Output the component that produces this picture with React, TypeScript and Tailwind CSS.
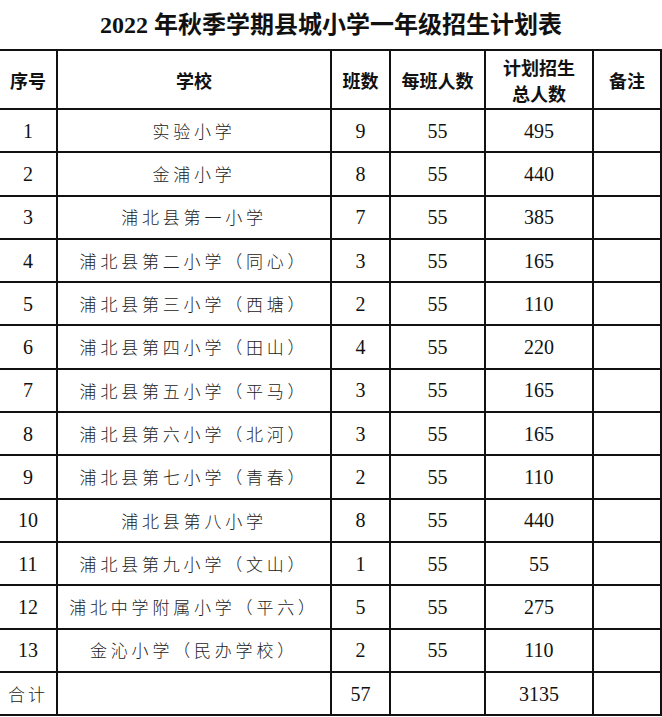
const rows = [
  { no: "1", name: "实验小学", cls: "9", per: "55", total: "495" },
  { no: "2", name: "金浦小学", cls: "8", per: "55", total: "440" },
  { no: "3", name: "浦北县第一小学", cls: "7", per: "55", total: "385" },
  { no: "4", name: "浦北县第二小学（同心）", cls: "3", per: "55", total: "165" },
  { no: "5", name: "浦北县第三小学（西塘）", cls: "2", per: "55", total: "110" },
  { no: "6", name: "浦北县第四小学（田山）", cls: "4", per: "55", total: "220" },
  { no: "7", name: "浦北县第五小学（平马）", cls: "3", per: "55", total: "165" },
  { no: "8", name: "浦北县第六小学（北河）", cls: "3", per: "55", total: "165" },
  { no: "9", name: "浦北县第七小学（青春）", cls: "2", per: "55", total: "110" },
  { no: "10", name: "浦北县第八小学", cls: "8", per: "55", total: "440" },
  { no: "11", name: "浦北县第九小学（文山）", cls: "1", per: "55", total: "55" },
  { no: "12", name: "浦北中学附属小学（平六）", cls: "5", per: "55", total: "275" },
  { no: "13", name: "金沁小学（民办学校）", cls: "2", per: "55", total: "110" },
];

const serif = "font-['Liberation_Serif','Noto_Sans_CJK_SC',serif]";
const cjk = "font-['Noto_Sans_CJK_SC',sans-serif]";

export default function App() {
  return (
    <div className="w-[662px] h-[717px] bg-white overflow-hidden text-[#111]">
      <div className="h-[49px] flex items-center justify-center">
        <h1 className={`${serif} font-bold text-[24px] leading-none pt-[1px]`}>
          2022 年秋季学期县城小学一年级招生计划表
        </h1>
      </div>
      <table className="table-fixed border-collapse w-[661px]">
        <colgroup>
          <col className="w-[57px]" />
          <col className="w-[274px]" />
          <col className="w-[59px]" />
          <col className="w-[95px]" />
          <col className="w-[108px]" />
          <col className="w-[68px]" />
        </colgroup>
        <thead>
          <tr className={`h-[59px] ${cjk} font-bold text-[18px] leading-[26px]`}>
            <th className="border-y-2 border-r-2 border-[#111] text-center">序号</th>
            <th className="border-2 border-[#111] text-center">学校</th>
            <th className="border-2 border-[#111] text-center">班数</th>
            <th className="border-2 border-[#111] text-center">每班人数</th>
            <th className="border-2 border-[#111] text-center">
              计划招生
              <br />
              总人数
            </th>
            <th className="border-2 border-[#111] text-center">备注</th>
          </tr>
        </thead>
        <tbody>
          {rows.map((r) => (
            <tr key={r.no} className="h-[43.3px]">
              <td className={`border-y-2 border-r-2 border-[#111] text-center ${serif} text-[20px]`}>{r.no}</td>
              <td className={`border-2 border-[#111] text-center ${cjk} font-light text-[17px] tracking-[3.8px] text-[#222]`}>
                {r.name}
              </td>
              <td className={`border-2 border-[#111] text-center ${serif} text-[20px]`}>{r.cls}</td>
              <td className={`border-2 border-[#111] text-center ${serif} text-[20px]`}>{r.per}</td>
              <td className={`border-2 border-[#111] text-center ${serif} text-[20px]`}>{r.total}</td>
              <td className="border-2 border-[#111]"></td>
            </tr>
          ))}
          <tr className="h-[43.3px]">
            <td className={`border-y-2 border-r-2 border-[#111] text-center ${cjk} font-light text-[17px] tracking-[3px] text-[#222]`}>
              合计
            </td>
            <td className="border-2 border-[#111]"></td>
            <td className={`border-2 border-[#111] text-center ${serif} text-[20px]`}>57</td>
            <td className="border-2 border-[#111]"></td>
            <td className={`border-2 border-[#111] text-center ${serif} text-[20px]`}>3135</td>
            <td className="border-2 border-[#111]"></td>
          </tr>
        </tbody>
      </table>
    </div>
  );
}
